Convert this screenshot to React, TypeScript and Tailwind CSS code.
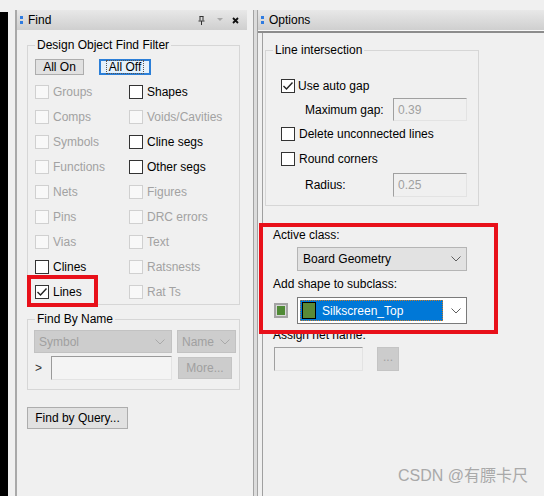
import React from 'react';

const Chevron: React.FC<{ color?: string }> = ({ color = '#5f5f5f' }) => (
  <svg width="10" height="6" viewBox="0 0 10 6" fill="none">
    <polyline points="0.5,0.5 5,5 9.5,0.5" stroke={color} strokeWidth="1" />
  </svg>
);

const CheckBox: React.FC<{ checked?: boolean; disabled?: boolean }> = ({ checked, disabled }) => (
  <span
    className={`flex h-[14px] w-[14px] shrink-0 items-center justify-center border ${
      disabled ? 'border-[#d0d0d0] bg-[#f8f8f8]' : 'border-[#333333] bg-white'
    }`}
  >
    {checked && (
      <svg width="12" height="12" viewBox="0 0 12 12" fill="none">
        <polyline points="1.5,6 4.5,9 10.5,2.5" stroke="#222" strokeWidth="1.4" />
      </svg>
    )}
  </span>
);

const Check: React.FC<{ label: string; checked?: boolean; disabled?: boolean }> = ({ label, checked, disabled }) => (
  <div className="flex h-[25px] items-center gap-[4px]">
    <CheckBox checked={checked} disabled={disabled} />
    <span className={disabled ? 'text-[#a2a2a2]' : 'text-black'}>{label}</span>
  </div>
);

const GroupBox: React.FC<{ title: string; className?: string; children: React.ReactNode }> = ({ title, className, children }) => (
  <div className={`border border-[#d6d6d6] ${className ?? ''}`}>
    <span className="-mt-[8px] ml-[7px] block w-fit bg-[#f0f0f0] px-[2px] leading-[14px]">{title}</span>
    {children}
  </div>
);

const PanelHeader: React.FC<{ title: string; children?: React.ReactNode }> = ({ title, children }) => (
  <div className="flex h-[20px] items-center bg-linear-to-b from-[#e8e8e8] to-[#cfcfcf] pl-[3px] pr-[8px]">
    <div className="flex flex-col gap-[2px]">
      <span className="h-[3px] w-[3px] bg-[#2f7be0]" />
      <span className="h-[3px] w-[3px] bg-[#2f7be0]" />
    </div>
    <span className="ml-[5px] text-black">{title}</span>
    <div className="ml-auto flex items-center">{children}</div>
  </div>
);

const filterRows: [string, boolean, boolean, string, boolean][] = [
  // label, disabled, checked, right label, right disabled
  ['Groups', true, false, 'Shapes', false],
  ['Comps', true, false, 'Voids/Cavities', true],
  ['Symbols', true, false, 'Cline segs', false],
  ['Functions', true, false, 'Other segs', false],
  ['Nets', true, false, 'Figures', true],
  ['Pins', true, false, 'DRC errors', true],
  ['Vias', true, false, 'Text', true],
  ['Clines', false, false, 'Ratsnests', true],
  ['Lines', false, true, 'Rat Ts', true],
];

const FindPanel: React.FC = () => (
  <div className="flex w-[232px] flex-col border-l-2 border-[#a9a9a9]">
    <PanelHeader title="Find">
      <svg width="7" height="9" viewBox="0 0 7 9" fill="none">
        <path d="M1.5 0.5h4M2 0.5v4M5 0.5v4M0.5 5h6M3.5 5v4" stroke="#333" strokeWidth="1" />
      </svg>
      <svg width="6" height="4" viewBox="0 0 6 4" className="ml-[12px]">
        <polygon points="0,0 6,0 3,3" fill="#a8a8a8" />
      </svg>
      <svg width="7" height="7" viewBox="0 0 7 7" className="ml-[9px]">
        <path d="M1 1l5 5M6 1l-5 5" stroke="#111" strokeWidth="1.8" />
      </svg>
    </PanelHeader>

    <GroupBox title="Design Object Find Filter" className="ml-[10px] mt-[15px] w-[213px]">
      <div className="mt-[7px] flex gap-[15px] pl-[7px]">
        <button className="flex h-[16px] w-[49px] items-center justify-center border border-[#adadad] bg-[#e1e1e1] leading-none">
          All On
        </button>
        <button className="flex h-[16px] w-[52px] items-center justify-center border-2 border-[#2b7fd8] bg-[#e5f1fb] leading-none">
          <span className="border border-dotted border-[#555] px-[2px]">All Off</span>
        </button>
      </div>
      <div className="mt-[4px] grid grid-cols-[94px_1fr] pl-[7px]">
        {filterRows.map(([l, ld, lc, r, rd]) => (
          <React.Fragment key={l}>
            <Check label={l} disabled={ld} checked={lc} />
            <Check label={r} disabled={rd} />
          </React.Fragment>
        ))}
      </div>
    </GroupBox>

    <GroupBox title="Find By Name" className="ml-[10px] mt-[14px] w-[213px] pb-[9px]">
      <div className="mt-[4px] flex gap-[5px] pl-[6px]">
        <div className="flex h-[23px] w-[138px] items-center justify-between border border-[#c2c2c2] bg-[#cdcdcd] pl-[4px] pr-[6px] text-[#a0a0a0]">
          Symbol
          <Chevron color="#a9a9a9" />
        </div>
        <div className="flex h-[23px] w-[59px] items-center justify-between border border-[#c2c2c2] bg-[#cdcdcd] pl-[4px] pr-[5px] text-[#a0a0a0]">
          Name
          <Chevron color="#a9a9a9" />
        </div>
      </div>
      <div className="mt-[3px] flex items-center pl-[7px]">
        <span className="w-[16px] text-[#333]">&gt;</span>
        <div className="h-[24px] w-[121px] border border-b-[#e3e3e3] border-l-[#9a9a9a] border-r-[#e3e3e3] border-t-[#9a9a9a] bg-[#f4f4f4]" />
        <button className="ml-[6px] h-[22px] w-[54px] border border-[#c4c4c4] bg-[#cccccc] text-[#a0a0a0]">More...</button>
      </div>
    </GroupBox>

    <button className="ml-[10px] mt-[17px] h-[22px] w-[101px] border border-[#adadad] bg-[#e1e1e1]">Find by Query...</button>
  </div>
);

const Field: React.FC<{ value?: string; className?: string }> = ({ value, className }) => (
  <div
    className={`flex items-center border border-b-[#e3e3e3] border-l-[#a0a0a0] border-r-[#e3e3e3] border-t-[#a0a0a0] bg-[#f0f0f0] pl-[4px] text-[#a0a0a0] ${className ?? ''}`}
  >
    {value}
  </div>
);

const OptionsPanel: React.FC = () => (
  <div className="flex flex-1 flex-col">
    <PanelHeader title="Options" />
    <div className="h-[3px] border-b-2 border-t border-b-[#8c8c8c] border-t-[#f8f8f8]" />
    <div className="ml-[4px] flex flex-1 flex-col border-l border-[#a0a0a0]">
      <GroupBox title="Line intersection" className="ml-[2px] mt-[17px] w-[214px] pb-[8px]">
        <div className="mt-[22px] flex items-center gap-[3px] pl-[15px]">
          <CheckBox checked />
          <span>Use auto gap</span>
        </div>
        <div className="mt-[5px] flex items-center pl-[39px]">
          <span className="w-[88px]">Maximum gap:</span>
          <Field value="0.39" className="h-[23px] w-[74px]" />
        </div>
        <div className="mt-[6px] flex items-center gap-[4px] pl-[15px]">
          <CheckBox />
          <span>Delete unconnected lines</span>
        </div>
        <div className="mt-[11px] flex items-center gap-[4px] pl-[15px]">
          <CheckBox />
          <span>Round corners</span>
        </div>
        <div className="mt-[7px] flex items-center pl-[39px]">
          <span className="w-[88px]">Radius:</span>
          <Field value="0.25" className="h-[24px] w-[74px]" />
        </div>
      </GroupBox>

      <span className="ml-[10px] mt-[22px] leading-[14px]">Active class:</span>
      <div className="ml-[34px] mt-[5px] flex h-[24px] w-[170px] items-center justify-between border border-[#b5b5b5] bg-[#e2e2e2] pl-[5px] pr-[5px]">
        Board Geometry
        <Chevron />
      </div>

      <span className="ml-[10px] mt-[6px] leading-[14px]">Add shape to subclass:</span>
      <div className="ml-[11px] mt-[6px] flex h-[27px] items-center gap-[9px]">
        <span className="flex h-[15px] w-[14px] items-center justify-center border-2 border-[#a4a4a4] bg-[#d8d8d8]">
          <span className="h-[9px] w-[8px] bg-[#4f8a35]" />
        </span>
        <div className="flex h-[27px] w-[170px] items-center border border-[#7a7a7a] bg-white pl-[2px] pr-[5px]">
          <div className="flex h-[21px] w-[143px] items-center border border-dotted border-[#c87c2a] bg-[#0078d7] pl-[1px]">
            <span className="h-[17px] w-[14px] border border-black bg-[#5a8a38]" />
            <span className="ml-[6px] text-white">Silkscreen_Top</span>
          </div>
          <span className="ml-auto">
            <Chevron />
          </span>
        </div>
      </div>

      <span className="ml-[10px] mt-[4px] leading-[14px]">Assign net name:</span>
      <div className="ml-[11px] mt-[5px] flex items-center gap-[14px]">
        <Field className="h-[24px] w-[89px]" />
        <button className="flex h-[24px] w-[22px] items-center justify-center border border-[#c4c4c4] bg-[#cccccc] pb-[4px] text-[#a0a0a0]">
          ...
        </button>
      </div>
    </div>
  </div>
);

export default function App() {
  return (
    <div className="relative flex h-[496px] w-[544px] overflow-hidden bg-[#f0f0f0] pt-[10px] font-['Liberation_Sans',Arial,sans-serif] text-[12px] leading-[14px] text-black">
      <div className="mt-[2px] w-[8px] bg-black" />
      <div className="w-[7px]" />
      <FindPanel />
      <div className="w-[6px]" />
      <div className="w-[5px] border-x border-[#a3a3a3] bg-[#dcdcdc]" />
      <OptionsPanel />

      {/* red highlight boxes */}
      <div className="absolute left-[27px] top-[275px] h-[32px] w-[71px] border-[4px] border-[#e8101a]" />
      <div className="absolute left-[259px] top-[223px] h-[111px] w-[239px] border-[4px] border-[#e8101a]" />

      <div className="absolute bottom-[11px] right-[16px] font-['Liberation_Sans','Noto_Sans_CJK_SC',sans-serif] text-[16px] leading-[18px] text-[#a9a9a9]">
        CSDN @有膘卡尺
      </div>
    </div>
  );
}
